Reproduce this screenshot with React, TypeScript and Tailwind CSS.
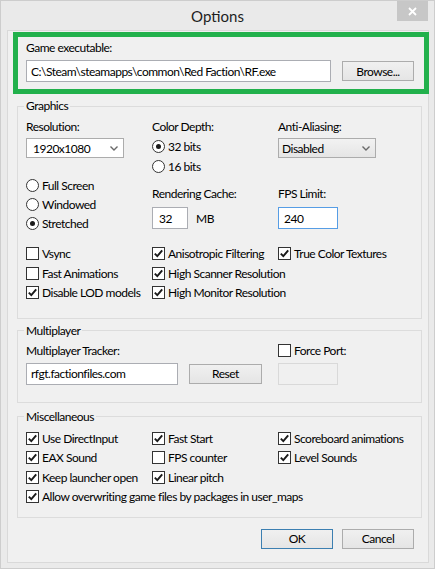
import React from 'react';

const font = "font-['Segoe_UI',Lato,sans-serif]";

function CheckMark() {
  return (
    <svg width="11" height="11" viewBox="0 0 11 11">
      <polyline points="1.8,5.6 4.3,8.2 9.2,2.4" fill="none" stroke="#1a1a1a" strokeWidth="1.9" />
    </svg>
  );
}

function Check({ label, checked }: { label: string; checked?: boolean }) {
  return (
    <div className="flex items-center h-[19.5px] whitespace-nowrap">
      <span className="w-[13px] h-[13px] shrink-0 border border-[#333] bg-white flex items-center justify-center">
        {checked && <CheckMark />}
      </span>
      <span className="ml-[3px]">{label}</span>
    </div>
  );
}

function Radio({ label, checked, h }: { label: string; checked?: boolean; h: string }) {
  return (
    <div className={`flex items-center whitespace-nowrap ${h}`}>
      <span className="w-[13px] h-[13px] shrink-0 rounded-full border border-[#333] bg-white flex items-center justify-center">
        {checked && <span className="w-[5px] h-[5px] rounded-full bg-[#1a1a1a]" />}
      </span>
      <span className="ml-[3px]">{label}</span>
    </div>
  );
}

function Chevron() {
  return (
    <svg width="8" height="5" viewBox="0 0 8 5">
      <polyline points="0.5,0.5 4,4 7.5,0.5" fill="none" stroke="#6a6a6a" strokeWidth="1.4" />
    </svg>
  );
}

function Button({ label, primary, w }: { label: string; primary?: boolean; w: string }) {
  return (
    <div
      className={`h-[20px] ${w} flex items-center justify-center border bg-linear-to-b from-[#f0f0f0] to-[#e5e5e5] ${
        primary ? 'border-[#3c7fb1]' : 'border-[#acacac]'
      }`}
    >
      {label}
    </div>
  );
}

function Group({ title, children }: { title: string; children: React.ReactNode }) {
  return (
    <fieldset className="ml-[9px] w-[405px] border border-[#dcdcdc]">
      <legend className="ml-[6px] px-[2px] leading-[14px]">{title}</legend>
      {children}
    </fieldset>
  );
}

export default function App() {
  return (
    <div className={`w-[435px] h-[569px] bg-[#eaeaea] border border-[#cdcdcd] text-[12px] leading-[15px] tracking-[-0.5px] text-black ${font}`}>
      {/* title bar */}
      <div className="h-[29px] grid grid-cols-[1fr_auto_1fr]">
        <div />
        <div className="self-center text-[15px] leading-[18px] tracking-normal text-[#1e1e1e]">Options</div>
        <div className="flex justify-end pr-[6px]">
          <div className="w-[31px] h-[20px] bg-[#c7c7c7] flex items-center justify-center">
            <svg width="9" height="9" viewBox="0 0 9 9">
              <path d="M1 1 L8 8 M8 1 L1 8" stroke="#fff" strokeWidth="1.8" />
            </svg>
          </div>
        </div>
      </div>

      {/* client area */}
      <div className="ml-[6px] w-[422px] h-[533px] bg-[#f0f0f0] border border-[#d9d9d9]">
        {/* highlighted game executable box */}
        <div className="ml-[5px] mt-[1px] w-[416px] h-[62px] border-[5px] border-[#22b14c] pl-[8px] pt-[3px]">
          <div>Game executable:</div>
          <div className="flex items-center mt-[5px]">
            <div className="w-[305px] h-[22px] bg-white border border-[#abadb3] flex items-center pl-[4px]">
              C:\Steam\steamapps\common\Red Faction\RF.exe
            </div>
            <div className="ml-[11px]">
              <Button label="Browse..." w="w-[72px]" />
            </div>
          </div>
        </div>

        <div className="mt-[5px]">
          <Group title="Graphics">
            <div className="pl-[8px] pt-[6px] pb-[15px]">
              <div className="flex">
                <div className="w-[126px] flex flex-col">
                  <div>Resolution:</div>
                  <div className="mt-[4px] w-[98px] h-[20px] bg-white border border-[#acacac] flex items-center justify-between pl-[6px] pr-[5px]">
                    <span>1920x1080</span>
                    <Chevron />
                  </div>
                  <div className="mt-[18px]">
                    <Radio label="Full Screen" h="h-[19px]" />
                    <Radio label="Windowed" h="h-[19px]" />
                    <Radio label="Stretched" checked h="h-[19px]" />
                  </div>
                </div>
                <div className="w-[126px] flex flex-col">
                  <div>Color Depth:</div>
                  <div className="mt-[2px]">
                    <Radio label="32 bits" checked h="h-[20px]" />
                    <Radio label="16 bits" h="h-[20px]" />
                  </div>
                  <div className="mt-[10px]">Rendering Cache:</div>
                  <div className="mt-[6px] flex items-center">
                    <div className="w-[36px] h-[22px] bg-white border border-[#abadb3] flex items-center pl-[6px]">32</div>
                    <span className="ml-[8px]">MB</span>
                  </div>
                </div>
                <div className="flex flex-col">
                  <div>Anti-Aliasing:</div>
                  <div className="mt-[4px] w-[98px] h-[20px] bg-linear-to-b from-[#f2f2f2] to-[#e5e5e5] border border-[#acacac] flex items-center justify-between pl-[3px] pr-[5px]">
                    <span>Disabled</span>
                    <Chevron />
                  </div>
                  <div className="mt-[28px]">FPS Limit:</div>
                  <div className="mt-[6px] w-[60px] h-[22px] bg-white border border-[#569de5] flex items-center pl-[5px]">240</div>
                </div>
              </div>

              <div className="mt-[11px] grid grid-cols-[126px_126px_1fr]">
                <Check label="Vsync" />
                <Check label="Anisotropic Filtering" checked />
                <Check label="True Color Textures" checked />
                <Check label="Fast Animations" />
                <Check label="High Scanner Resolution" checked />
                <div />
                <Check label="Disable LOD models" checked />
                <Check label="High Monitor Resolution" checked />
                <div />
              </div>
            </div>
          </Group>
        </div>

        <div className="mt-[5px]">
          <Group title="Multiplayer">
            <div className="pl-[8px] pt-[5px] pb-[17px]">
              <div className="flex items-center h-[15px]">
                <div className="w-[252px]">Multiplayer Tracker:</div>
                <Check label="Force Port:" />
              </div>
              <div className="mt-[5px] flex items-center">
                <div className="w-[152px] h-[22px] bg-white border border-[#abadb3] flex items-center pl-[4px]">
                  rfgt.factionfiles.com
                </div>
                <div className="ml-[11px]">
                  <Button label="Reset" w="w-[73px]" />
                </div>
                <div className="ml-[16px] w-[60px] h-[22px] bg-[#f0f0f0] border border-[#d9d9d9]" />
              </div>
            </div>
          </Group>
        </div>

        <div className="mt-[7px]">
          <Group title="Miscellaneous">
            <div className="pl-[8px] pt-[5px] pb-[10px]">
              <div className="grid grid-cols-[126px_126px_1fr]">
                <Check label="Use DirectInput" checked />
                <Check label="Fast Start" checked />
                <Check label="Scoreboard animations" checked />
                <Check label="EAX Sound" checked />
                <Check label="FPS counter" />
                <Check label="Level Sounds" checked />
                <Check label="Keep launcher open" checked />
                <Check label="Linear pitch" checked />
                <div />
                <div className="col-span-3">
                  <Check label="Allow overwriting game files by packages in user_maps" checked />
                </div>
              </div>
            </div>
          </Group>
        </div>

        <div className="mt-[11px] ml-[9px] w-[405px] pr-[8px] flex justify-end gap-[9px]">
          <Button label="OK" primary w="w-[72px]" />
          <Button label="Cancel" w="w-[72px]" />
        </div>
      </div>
    </div>
  );
}
